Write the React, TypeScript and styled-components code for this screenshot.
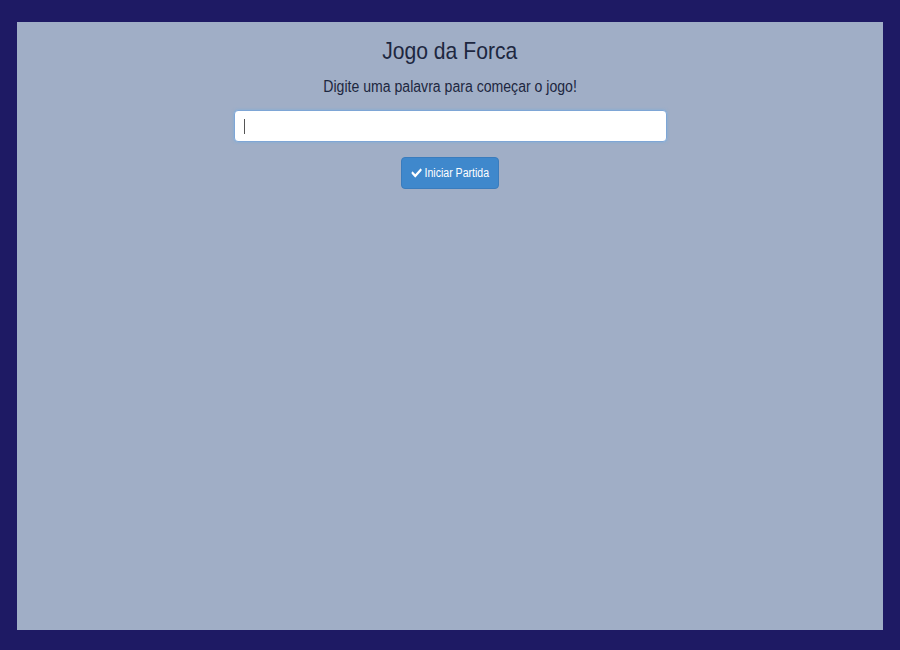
import React from "react";
import styled, { createGlobalStyle } from "styled-components";
import { FaCheck } from "react-icons/fa";

const Global = createGlobalStyle`
  html, body { margin: 0; padding: 0; background: #1e1a64; }
  body { font-family: "Liberation Sans", Arial, sans-serif; }
  * { box-sizing: border-box; }
`;

const Frame = styled.div`
  width: 900px;
  height: 650px;
  padding: 22px 17px 20px 17px;
  background: #1e1a64;
`;

const Panel = styled.main`
  height: 100%;
  background: #a0aec6;
  display: flex;
  flex-direction: column;
  align-items: center;
  padding-top: 16px;
  color: #1d2740;
`;

const Squeeze = styled.span`
  display: inline-block;
  transform: scaleX(0.88);
  transform-origin: center;
  white-space: nowrap;
`;

const Title = styled.h3`
  margin: 0;
  font-size: 24px;
  line-height: 26px;
  font-weight: 400;
`;

const Subtitle = styled.p`
  margin: 13px 0 0;
  font-size: 16px;
  line-height: 20px;
`;

const Field = styled.label`
  margin-top: 13px;
  width: 433px;
  height: 32px;
  background: #fff;
  border: 1px solid #7ea6d6;
  border-radius: 4px;
  box-shadow: 0 0 3px rgba(102, 175, 233, 0.6);
  display: flex;
  align-items: center;
  padding-left: 9px;
`;

const Caret = styled.span`
  width: 1px;
  height: 15px;
  background: #555;
  flex: none;
`;

const Input = styled.input`
  flex: 1;
  border: none;
  outline: none;
  background: transparent;
  font: inherit;
  font-size: 14px;
  caret-color: transparent;
`;

const Button = styled.button`
  margin-top: 15px;
  width: 98px;
  height: 32px;
  background: #3f88cc;
  border: 1px solid #3a7cbd;
  border-radius: 4px;
  color: #fff;
  font-family: "Liberation Sans", Arial, sans-serif;
  font-size: 12px;
  display: flex;
  align-items: center;
  justify-content: center;
  padding: 0;
  cursor: pointer;
  svg { width: 12px; height: 12px; }
`;

const ButtonLabel = styled(Squeeze)`
  display: flex;
  align-items: center;
  gap: 3px;
`;

export default function App() {
  return (
    <>
      <Global />
      <Frame>
        <Panel>
          <Title>
            <Squeeze>Jogo da Forca</Squeeze>
          </Title>
          <Subtitle>
            <Squeeze>Digite uma palavra para começar o jogo!</Squeeze>
          </Subtitle>
          <Field>
            <Caret />
            <Input type="text" />
          </Field>
          <Button>
            <ButtonLabel>
              <FaCheck />
              Iniciar Partida
            </ButtonLabel>
          </Button>
        </Panel>
      </Frame>
    </>
  );
}
